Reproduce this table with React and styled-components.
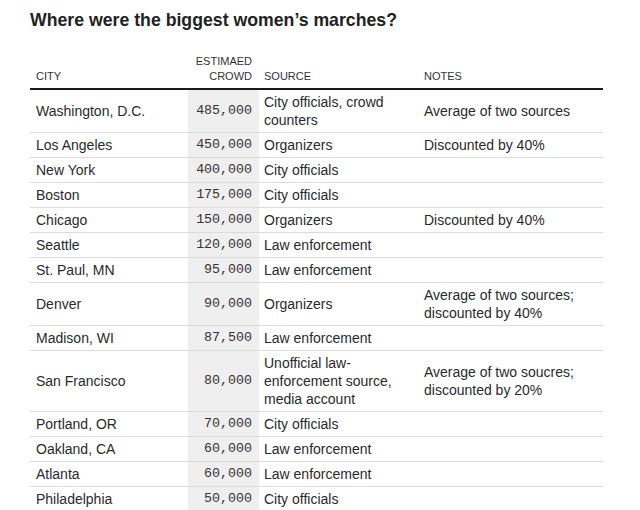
import React from 'react';
import styled, { createGlobalStyle } from 'styled-components';

const GlobalStyle = createGlobalStyle`
	html, body {
		margin: 0;
		padding: 0;
		background: #fff;
	}
	body {
		font-family: "Liberation Sans", Arial, sans-serif;
		color: #222;
	}
`

const Wrapper = styled.section`
	width: 640px;
	height: 510px;
	overflow: hidden;
	padding: 10px 0 0 30px;
	box-sizing: border-box;
`

const Title = styled.h2`
	margin: 0;
	font-size: 17.7px;
	line-height: 21px;
	font-weight: 700;
	color: #222;
`

const Table = styled.table`
	margin-top: 23px;
	width: 573px;
	border-collapse: collapse;
	table-layout: fixed;
`

const HeadCell = styled.th`
	font-size: 11px;
	line-height: 15px;
	font-weight: 400;
	text-transform: uppercase;
	color: #333;
	text-align: ${p => (p.$right ? 'right' : 'left')};
	vertical-align: bottom;
	padding: 0 ${p => (p.$right ? '7px' : '6px')} 4px ${p => (p.$tight ? '5px' : '6px')};
	border-bottom: 2px solid #1a1a1a;
`

const Row = styled.tr`
	border-bottom: 1px solid #dcdcdc;
`

const Cell = styled.td`
	font-size: 14px;
	line-height: 18px;
	color: #2a2a2a;
	padding: 3px 6px 3px ${p => (p.$tight ? '5px' : '6px')};
	vertical-align: middle;
`

const Crowd = styled.td`
	font-family: "Liberation Mono", "DejaVu Sans Mono", monospace;
	font-size: 13.3px;
	line-height: 18px;
	color: #333;
	text-align: right;
	padding: 3px 7px 3px 4px;
	background: #efefef;
	vertical-align: middle;
`

const rows = [
	['Washington, D.C.', '485,000', 'City officials, crowd counters', 'Average of two sources'],
	['Los Angeles', '450,000', 'Organizers', 'Discounted by 40%'],
	['New York', '400,000', 'City officials', ''],
	['Boston', '175,000', 'City officials', ''],
	['Chicago', '150,000', 'Organizers', 'Discounted by 40%'],
	['Seattle', '120,000', 'Law enforcement', ''],
	['St. Paul, MN', '95,000', 'Law enforcement', ''],
	['Denver', '90,000', 'Organizers', 'Average of two sources; discounted by 40%'],
	['Madison, WI', '87,500', 'Law enforcement', ''],
	['San Francisco', '80,000', 'Unofficial law-enforcement source, media account', 'Average of two soucres; discounted by 20%'],
	['Portland, OR', '70,000', 'City officials', ''],
	['Oakland, CA', '60,000', 'Law enforcement', ''],
	['Atlanta', '60,000', 'Law enforcement', ''],
	['Philadelphia', '50,000', 'City officials', ''],
]

function App() {
	return (
		<Wrapper>
			<GlobalStyle />
			<Title>Where were the biggest women’s marches?</Title>
			<Table>
				<colgroup>
					<col style={{ width: 158 }} />
					<col style={{ width: 71 }} />
					<col style={{ width: 159 }} />
					<col style={{ width: 185 }} />
				</colgroup>
				<thead>
					<tr>
						<HeadCell>City</HeadCell>
						<HeadCell $right>Estimaed<br />crowd</HeadCell>
						<HeadCell $tight>Source</HeadCell>
						<HeadCell>Notes</HeadCell>
					</tr>
				</thead>
				<tbody>
					{rows.map(r => (
						<Row key={r[0]}>
							<Cell>{r[0]}</Cell>
							<Crowd>{r[1]}</Crowd>
							<Cell $tight>{r[2]}</Cell>
							<Cell>{r[3]}</Cell>
						</Row>
					))}
				</tbody>
			</Table>
		</Wrapper>
	);
}

export default App;
